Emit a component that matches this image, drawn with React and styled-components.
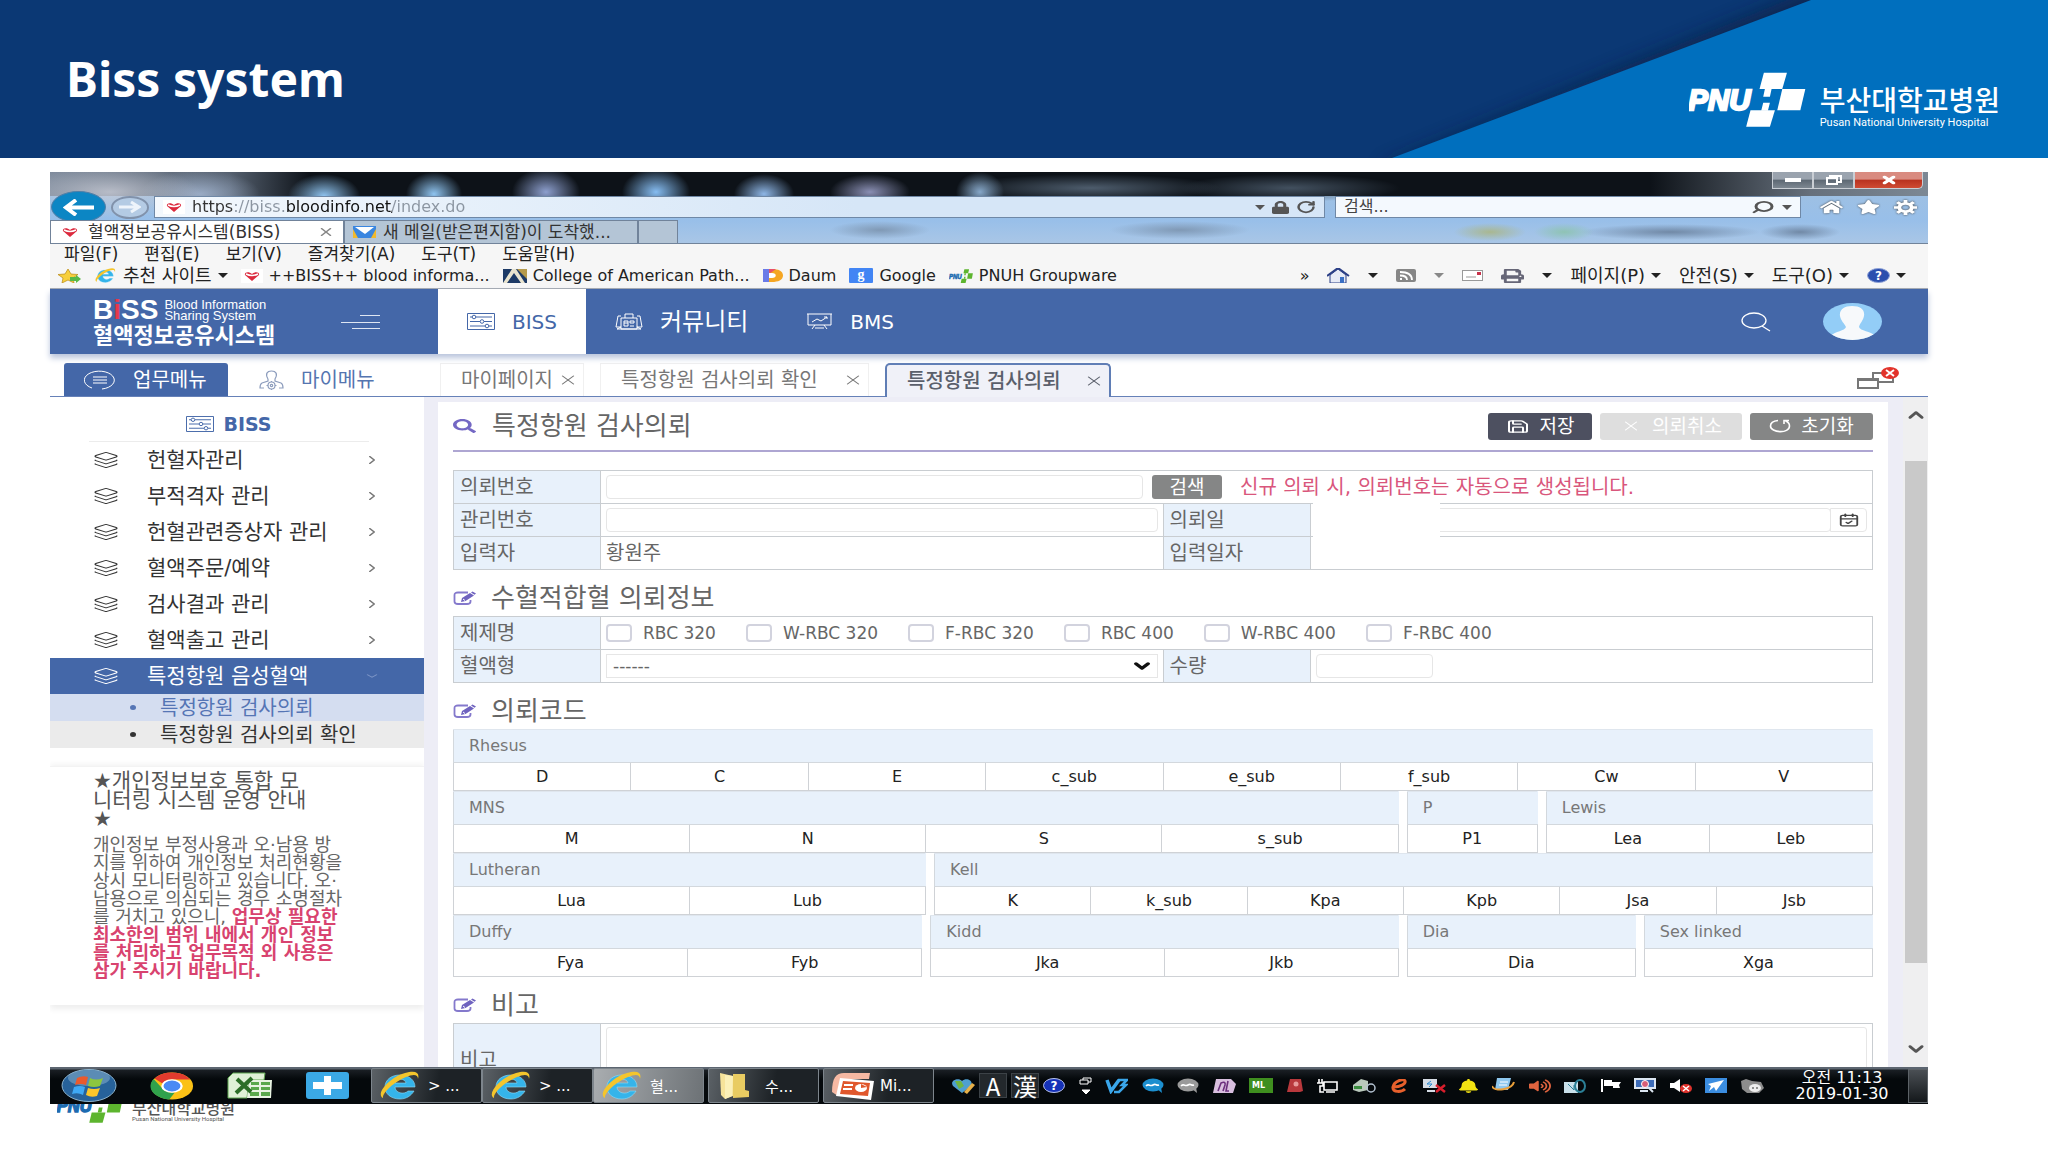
import React from "react";
import styled, { createGlobalStyle, css } from "styled-components";
import {
  Layers, ChevronRight, ChevronDown, ChevronUp, X, Search, RotateCw,
  Save, CalendarCheck, Rss,
} from "lucide-react";
import {
  FaSearch, FaLock, FaHome, FaStar, FaPrint, FaBell, FaFlag, FaVolumeUp, FaVolumeMute,
} from "react-icons/fa";

const GlobalStyle = createGlobalStyle`
  * { box-sizing: border-box; }
  body { margin: 0; background: #fff; }
  body, button, input, select, textarea {
    font-family: "DejaVu Sans", "Noto Sans CJK KR", sans-serif;
  }
  button { border: 0; padding: 0; background: none; color: inherit; cursor: pointer; }
  a { color: inherit; text-decoration: none; }
  ul { list-style: none; margin: 0; padding: 0; }
  h1, h2, h3, p { margin: 0; font-weight: 400; }
`

const Icon = styled.svg.attrs({ preserveAspectRatio: "none", "aria-hidden": true })`
  width: ${(p) => p.$w}px;
  height: ${(p) => p.$h}px;
  flex: none;
  display: block;
`

/* slide */

const Page = styled.div`
  height: 100vh;
  display: flex;
  flex-direction: column;
  overflow: hidden;
`

const SlideHeader = styled.header`
  position: relative;
  height: 158px;
  flex: none;
  display: flex;
  align-items: center;
  justify-content: space-between;
  padding: 0 48px 0 66px;
  background: #0b3874;
  color: #fff;
`

const SlideShape = styled.svg`
  position: absolute;
  top: 0;
  right: 0;
  width: 700px;
  height: 158px;
`

const SlideTitle = styled.h1`
  font: 700 48px/60px "Noto Sans", sans-serif;
`

const Brand = styled.div`
  position: relative;
  display: flex;
  align-items: ${(p) => (p.$small ? "flex-end" : "center")};
  gap: ${(p) => (p.$small ? 9 : 14)}px;
  margin-top: ${(p) => (p.$small ? 0 : 40)}px;
`

const BrandText = styled.div`
  padding-top: ${(p) => (p.$small ? 0 : 16)}px;
  color: ${(p) => (p.$small ? "#555" : "#fff")};
  strong {
    display: block;
    font: 500 ${(p) => (p.$small ? "16px/16px" : "28px/32px")} "Noto Sans CJK KR", sans-serif;
  }
  span {
    display: block;
    font: 400 ${(p) => (p.$small ? "6px/8px" : "11px/16px")} "Roboto", sans-serif;
  }
`

const SlideFooter = styled.footer`
  height: 19px;
  margin: 0 0 29px 57px;
  flex: none;
  overflow: hidden;
  display: flex;
  align-items: flex-end;
`

/* browser window */

const Window = styled.div`
  flex: 1;
  min-height: 0;
  margin: 14px 120px 0 50px;
  display: flex;
  flex-direction: column;
  color: #222;
`

const Glass = styled.div`
  background:
    radial-gradient(ellipse 90px 26px at 60px 20px, #c9ccd6cc, transparent),
    radial-gradient(ellipse 60px 24px at 150px 22px, #a9bcd8cc, transparent),
    radial-gradient(ellipse 36px 22px at 274px 24px, #8fc4f0, transparent),
    radial-gradient(ellipse 28px 22px at 384px 22px, #8fc4f0, transparent),
    radial-gradient(ellipse 34px 24px at 496px 20px, #8d9fce, transparent),
    radial-gradient(ellipse 34px 24px at 606px 20px, #86bdf2, transparent),
    radial-gradient(ellipse 30px 20px at 714px 22px, #8eb6e6, transparent),
    radial-gradient(ellipse 40px 18px at 820px 20px, #8a8fb4, transparent),
    radial-gradient(ellipse 24px 20px at 930px 20px, #86a7c8, transparent),
    radial-gradient(ellipse 130px 14px at 1040px 16px, #4d5c6c, transparent),
    radial-gradient(ellipse 110px 14px at 1240px 16px, #42505f, transparent),
    radial-gradient(ellipse 50px 9px at 830px 58px, #8099b5, transparent),
    radial-gradient(ellipse 70px 9px at 1130px 58px, #8099b5, transparent),
    radial-gradient(ellipse 36px 9px at 1440px 60px, #a9b790, transparent),
    radial-gradient(ellipse 30px 9px at 1514px 60px, #8fc3b4, transparent),
    radial-gradient(ellipse 90px 8px at 1620px 60px, #7189a6, transparent),
    radial-gradient(ellipse 40px 8px at 1750px 60px, #7189a6, transparent),
    linear-gradient(90deg, #7f8b9c 0, #55606f 180px, #0d1218 260px, #0d1218 1600px, #66707c 1760px, #7c8894 100%) 0 0 / 100% 24px no-repeat,
    linear-gradient(180deg, #9dc0e4 24px, #98bfe9 48px, #a9c6e6 100%);
`

const TitleBar = styled.div`
  height: 18px;
  display: flex;
  justify-content: flex-end;
  padding-right: 5px;
`

const CaptionButton = styled.button`
  width: ${(p) => (p.$close ? 69 : 41)}px;
  height: 17px;
  display: flex;
  align-items: center;
  justify-content: center;
  border: 1px solid #c9ced4;
  border-top: 0;
  border-radius: ${(p) => (p.$close ? "0 0 5px 0" : "0")};
  background: ${(p) => (p.$close
    ? "linear-gradient(#d98b80 0 45%, #b8321f 50%, #cf4b33)"
    : "linear-gradient(#9aa3ae 0 45%, #5d6873 50%, #7d8791)")};
`

const AddressRow = styled.div`
  height: 30px;
  display: flex;
  align-items: center;
  padding: 4px 11px 0 0;
`

const BackButton = styled.button`
  width: 55px;
  height: 32px;
  margin-left: 1px;
  border-radius: 50%;
  background: #0c86c4;
  border: 1px solid #4f7fa8;
  display: flex;
  align-items: center;
  justify-content: center;
`

const ForwardButton = styled(BackButton)`
  width: 38px;
  height: 23px;
  margin: 0 5px;
  background: #b4cbe4;
  border: 2px solid #8192ab;
`

const Field = styled.label`
  height: 22px;
  display: flex;
  align-items: center;
  gap: 7px;
  padding: 0 8px;
  border: 1px solid #6f88a6;
  background: ${(p) => (p.$search ? "#f4f9fe" : "linear-gradient(90deg, #f3f8fd, #d6e6f7 60%)")};
  flex: ${(p) => (p.$search ? "0 0 466px" : "1")};
  margin-right: ${(p) => (p.$search ? 19 : 10)}px;
`

const FieldInput = styled.input`
  flex: 1;
  min-width: 0;
  border: 0;
  padding: 0;
  outline: 0;
  background: none;
  font-size: 16px;
  line-height: 20px;
  color: #222;
  &::placeholder { color: #444; opacity: 1; }
`

const UrlInput = styled(FieldInput)`
  color: transparent;
  background: linear-gradient(90deg, #333 42px, #8b95a1 42px 94px, #111 94px 200px, #8b95a1 200px);
  background-clip: text;
`

const ChromeTools = styled.div`
  display: flex;
  gap: 14px;
  color: #fff;
  svg { filter: drop-shadow(0 0 1px #444); }
`

const BrowserTabs = styled.div`
  height: 23px;
  display: flex;
`

const BrowserTab = styled.button`
  width: ${(p) => p.$w}px;
  display: flex;
  align-items: center;
  gap: 7px;
  padding: 0 8px;
  font-size: 17px;
  line-height: 20px;
  white-space: nowrap;
  color: #333;
  border: 1px solid #71839a;
  border-bottom: 0;
  background: ${(p) => (p.$active ? "#fff" : "#b4c5d6")};
  span { flex: 1; text-align: left; }
`

const MenuBar = styled.nav`
  height: 20px;
  display: flex;
  align-items: center;
  gap: 26px;
  padding-left: 14px;
  background: #f6f6f6;
  border-top: 1px solid #71839a;
  font-size: 17px;
  line-height: 18px;
`

const LinksBar = styled.div`
  height: 26px;
  display: flex;
  align-items: center;
  gap: 13px;
  padding: 0 22px 0 8px;
  background: #f6f6f6;
  border-bottom: 1px solid #a3a8b0;
  font-size: 16px;
  line-height: 20px;
  white-space: nowrap;
`

const LinkItem = styled.a`
  display: flex;
  align-items: center;
  gap: 6px;
  font-size: ${(p) => (p.$ko ? 18 : 16)}px;
`

const LinkTools = styled.div`
  margin-left: auto;
  display: flex;
  align-items: center;
  gap: 18px;
`

/* BISS application */

const AppHeader = styled.header`
  height: 65px;
  flex: none;
  display: flex;
  align-items: stretch;
  background: #4467a8;
  color: #fff;
  position: relative;
  box-shadow: 0 4px 6px #b9c4dc;
`

const BissLogo = styled.a`
  width: 388px;
  padding: 10px 58px 0 43px;
  display: flex;
  justify-content: space-between;
`

const LogoTop = styled.div`
  display: flex;
  align-items: center;
  gap: 6px;
  height: 22px;
  strong { font: 700 28px/22px "Liberation Sans", sans-serif; }
  i { font-style: normal; color: #e8384a; }
  span { font: 400 13px/11px "Liberation Sans", sans-serif; }
`

const LogoBottom = styled.div`
  font: 700 22px/24px "Noto Sans CJK KR", sans-serif;
`

const MainNavItem = styled.a`
  display: flex;
  align-items: center;
  gap: 17px;
  padding: 0 29px;
  font-size: ${(p) => (p.$ko ? 24 : 20)}px;
  line-height: 28px;
  ${(p) => p.$active && css`
    background: #fff;
    color: #4467a8;
  `}
`

const HeaderTools = styled.div`
  margin-left: auto;
  display: flex;
  align-items: center;
  gap: 52px;
  padding-right: 46px;
`

const CloseTabs = styled.button`
  margin: 0 29px 7px auto;
`

const TabRow = styled.div`
  height: 43px;
  flex: none;
  display: flex;
  align-items: flex-end;
  border-bottom: 1px solid #6681b8;
`

const SideSwitch = styled.div`
  width: 390px;
  padding-left: 14px;
  display: flex;
`

const SwitchButton = styled.button`
  height: 33px;
  display: flex;
  align-items: center;
  gap: 17px;
  font-size: 20px;
  line-height: 24px;
  border-radius: 3px 3px 0 0;
  width: ${(p) => (p.$active ? 164 : 176)}px;
  padding-left: ${(p) => (p.$active ? 20 : 31)}px;
  color: ${(p) => (p.$active ? "#fff" : "#5575b0")};
  background: ${(p) => (p.$active ? "#4467a8" : "none")};
`

const PageTab = styled.div`
  height: 33px;
  display: flex;
  align-items: center;
  justify-content: space-between;
  width: ${(p) => p.$w}px;
  margin-right: 16px;
  padding: 0 4px 0 20px;
  border: 1px solid #f0f0f0;
  border-bottom: 0;
  font-size: 20px;
  line-height: 24px;
  white-space: nowrap;
  color: #777;
  ${(p) => p.$active && css`
    height: 34px;
    margin-bottom: -1px;
    border: 2px solid #5f7db5;
    border-bottom: 0;
    border-radius: 5px 5px 0 0;
    background: #f0f1f8;
    color: #5a5f6b;
    font-weight: 500;
  `}
`

const Workspace = styled.div`
  flex: 1;
  min-height: 0;
  display: flex;
  background: #ededf6;
`

const Sidebar = styled.aside`
  width: 374px;
  flex: none;
  overflow: hidden;
  background: #fff;
`

const SideTitle = styled.h2`
  display: flex;
  align-items: center;
  justify-content: center;
  gap: 9px;
  height: 45px;
  margin: 0 55px 0 39px;
  padding-top: 10px;
  border-bottom: 1px solid #ececec;
  font-size: 19px;
  font-weight: 700;
  color: #4467a8;
`

const SideLink = styled.a`
  height: 36px;
  display: flex;
  align-items: center;
  gap: 28px;
  padding: 0 43px;
  font-size: 21px;
  line-height: 28px;
  color: ${(p) => (p.$active ? "#fff" : "#333")};
  background: ${(p) => (p.$active ? "#4467a8" : "none")};
  span { flex: 1; white-space: nowrap; }
`

const SubLink = styled.a`
  height: 27px;
  display: flex;
  align-items: center;
  gap: 24px;
  padding-left: 80px;
  font-size: 20px;
  line-height: 24px;
  color: ${(p) => (p.$active ? "#5575b5" : "#333")};
  background: ${(p) => (p.$active ? "#d4ddf0" : "#ebebeb")};
  &::before {
    content: "";
    width: 6px;
    height: 5px;
    border-radius: 50%;
    background: currentColor;
  }
`

const Notice = styled.section`
  margin-top: 18px;
  height: 239px;
  padding: 5px 20px 0 43px;
  border-top: 1px solid #f3f3f3;
  box-shadow: 0 4px 6px #eee, 0 -3px 5px #f6f6f6;
  white-space: nowrap;
  h3 { font-size: 21px; line-height: 19px; color: #555; margin-bottom: 7px; }
  p { font-size: 18px; line-height: 18px; color: #666; }
  b { color: #d8436f; font-weight: 700; }
`

const Panel = styled.main`
  flex: 1;
  min-width: 0;
  margin: 5px 15px 0 14px;
  padding: 0 15px;
  background: #fff;
  overflow: hidden;
`

const PanelHead = styled.div`
  height: 50px;
  margin-bottom: 18px;
  display: flex;
  align-items: center;
  gap: 8px;
  border-bottom: 2px solid #aea6d2;
`

const PanelTitle = styled.h2`
  flex: 1;
  display: flex;
  align-items: center;
  gap: 16px;
  font-size: 26px;
  line-height: 32px;
  color: #666;
`

const ActionButton = styled.button`
  height: 27px;
  display: flex;
  align-items: center;
  justify-content: center;
  gap: 10px;
  width: ${(p) => p.$w}px;
  border-radius: 3px;
  font-size: 19px;
  line-height: 24px;
  color: #fff;
  background: ${(p) => p.$bg};
`

const LookupButton = styled(ActionButton)`
  height: 24px;
  margin-left: 9px;
`

const SectionTitle = styled.h3`
  height: 46px;
  display: flex;
  align-items: center;
  gap: 15px;
  padding-top: 10px;
  font-size: 26px;
  line-height: 32px;
  color: #666;
`

const FormTable = styled.table`
  width: 100%;
  table-layout: fixed;
  border-collapse: collapse;
  font-size: 20px;
  line-height: 24px;
  color: #666;
  th, td {
    height: ${(p) => p.$rowHeight || 33}px;
    padding: 0 6px;
    border: 1px solid #c9cdd1;
    text-align: left;
    font-weight: 400;
  }
  th { background: #e8f1fb; }
  td { padding: 0 5px; }
`

const LabelCol = styled.col`
  width: 147px;
`

const Cell = styled.div`
  position: relative;
  display: flex;
  align-items: center;
  gap: ${(p) => p.$gap || 0}px;
`

const TextInput = styled.input`
  display: block;
  height: 24px;
  width: ${(p) => (p.$w ? p.$w + "px" : "100%")};
  border: 1px solid #e6e6e6;
  border-radius: 4px;
  background: #fff;
  font-size: 16px;
`

const BloodSelect = styled.select`
  width: 100%;
  height: 24px;
  border: 1px solid #e6e6e6;
  background: #fff;
  padding: 0 6px;
  font-size: 17px;
  color: #666;
  appearance: none;
`

const SelectArrow = styled.span`
  position: absolute;
  right: 4px;
  color: #111;
  pointer-events: none;
`

const DateButton = styled.button`
  width: 37px;
  height: 24px;
  flex: none;
  margin-left: -1px;
  border: 1px solid #e6e6e6;
  border-radius: 0 4px 4px 0;
  display: flex;
  align-items: center;
  justify-content: center;
  color: #444;
`

const Blank = styled.span`
  position: absolute;
  left: -3px;
  top: -6px;
  width: 127px;
  height: 37px;
  background: #fff;
`

const Hint = styled.span`
  margin-left: 18px;
  color: #d9567c;
`

const Check = styled.label`
  display: flex;
  align-items: center;
  gap: 11px;
  font-size: 17px;
  input {
    appearance: none;
    width: 26px;
    height: 18px;
    margin: 0;
    border: 2px solid #d2d3de;
    border-radius: 4px;
  }
`

const Remark = styled.textarea`
  display: block;
  width: 100%;
  height: 66px;
  border: 1px solid #e6e6e6;
  border-radius: 3px;
  resize: none;
`

const CodeRow = styled.div`
  display: grid;
  grid-template-columns: ${(p) => p.$cols};
  gap: 8px;
`

const CodeTable = styled.table`
  width: 100%;
  table-layout: fixed;
  border-collapse: collapse;
  font-size: 16px;
  line-height: 20px;
  th {
    height: 33px;
    padding: 0 15px;
    text-align: left;
    font-weight: 400;
    color: #777;
    background: #e8f1fb;
    border: 1px solid #d3d8dd;
    border-right-color: #e8f1fb;
    border-top-color: #dfe6ee;
  }
  td {
    height: 28px;
    padding: 0;
    border: 1px solid #cfd2d6;
    text-align: center;
    color: #222;
  }
  button { width: 100%; font-size: 16px; }
`

const Scroll = styled.div`
  width: 25px;
  flex: none;
  padding: 8px 2px;
  display: flex;
  flex-direction: column;
  align-items: center;
  background: #efeff0;
  color: #555;
`

const Thumb = styled.div`
  width: 22px;
  flex: 499 0 0;
  background: #c9c9c9;
`

const Spacer = styled.div`
  flex: ${(p) => p.$grow} 0 0;
`

/* taskbar */

const Taskbar = styled.footer`
  height: 37px;
  flex: none;
  display: flex;
  align-items: center;
  background: linear-gradient(#5c6570 0 2px, #1a1f24 3px, #05090c 12px);
  color: #fff;
`

const Pinned = styled.div`
  width: 321px;
  flex: none;
  display: flex;
  align-items: center;
  gap: 33px;
  padding-left: 11px;
`

const TaskButton = styled.button`
  width: 111px;
  height: 35px;
  flex: none;
  display: flex;
  align-items: center;
  gap: 6px;
  padding-left: 6px;
  margin-right: ${(p) => p.$mr || 0}px;
  border: 1px solid #7d858c;
  border-radius: 2px;
  font-size: 15px;
  color: #fff;
  background: ${(p) => (p.$active
    ? "linear-gradient(100deg, #a9adb0, #6d7276)"
    : "linear-gradient(100deg, #5b6166, #1d2226 60%)")};
`

const LangBar = styled.div`
  display: flex;
  align-items: center;
  gap: 4px;
  margin-left: 17px;
  svg:last-child { margin-left: 10px; }
`

const LangKey = styled.span`
  width: 28px;
  height: 25px;
  border: 1px solid #3c4247;
  background: #23282c;
  text-align: center;
  font: 400 24px/24px "Noto Sans CJK JP", sans-serif;
`

const Tray = styled.div`
  flex: 1;
  display: flex;
  align-items: center;
  justify-content: space-between;
  padding: 0 30px 0 12px;
`

const Clock = styled.div`
  width: 96px;
  margin-right: 18px;
  text-align: center;
  font-size: 16px;
  line-height: 16px;
  white-space: nowrap;
`

const ShowDesktop = styled.button`
  width: 20px;
  height: 34px;
  border: 1px solid #5c6267;
  background: linear-gradient(#4a4f54, #14181b);
`

/* icons */

const Heart = () => (
  <Icon $w={22} $h={14} viewBox="0 0 22 14">
    <rect width="22" height="14" fill="#fff" />
    <path d="M11 12 4 6c-1-3 4-4 7-1 3-3 8-2 7 1z" fill="#dc2a3e" />
    <path d="M5 5q6 3 12 0" stroke="#fff" strokeWidth="1.4" fill="none" />
  </Icon>
)

const Caret = ({ color = "#222" }) => (
  <Icon $w={10} $h={5} viewBox="0 0 10 5"><path d="M0 0h10L5 5z" fill={color} /></Icon>
)

const Biss = ({ w = 28, h = 17 }) => (
  <Icon $w={w} $h={h} viewBox="0 0 28 17" fill="none" stroke="currentColor">
    <path d="M.5.5h27v16H.5zM3 4h2m4 0h16M3 8.500h10m4 0h8M3 13h15m4 0h3" />
    <circle cx="7" cy="4" r="1.800" />
    <circle cx="15" cy="8.500" r="1.800" />
    <circle cx="20" cy="13" r="1.800" />
  </Icon>
)

const Explorer = ({ w = 44, h = 29 }) => (
  <Icon $w={w} $h={h} viewBox="0 0 44 29">
    <path d="M37 16H17c0 6 9 8 13 4h6c-3 5-8 8-14 8C13 28 7 23 7 16S13 4 22 4s15 5 15 12zm-9-4c-1-5-10-5-11 0z" fill="#35b4ea" stroke="#8fdcf8" strokeWidth=".6" />
    <path d="M5 27C-3 23 12 6 27 2c10-3 15-1 13 6 0-5-5-5-12-2C16 11 4 22 5 27z" fill="#f4c52c" />
  </Icon>
)

const PnuhMark = ({ w, h, small }) => {
  const main = small ? "#1d6bb0" : "#fff"
  const cross = small ? "#5db52e" : "#fff"
  return (
    <Icon $w={w} $h={h} viewBox="0 0 350 165">
      <path d="M224 2h69l-14 49h-68z" fill={cross} />
      <path d="M279 51h69l-15 64h-69z" fill={cross} />
      <path d="M184 115h73l-15 49h-71z" fill={cross} />
      <path d="M227 51h20l-5 23h-20zM222 92h20l-6 24h-20z" fill={cross} />
      <text x="-2" y="114" fill={main} stroke={main} strokeWidth="7" fontFamily="Liberation Sans" fontStyle="italic" fontWeight="700" fontSize="88">PNU</text>
    </Icon>
  )
}

const Bubble = ({ color }) => (
  <Icon $w={22} $h={15} viewBox="0 0 22 15">
    <ellipse cx="11" cy="7" rx="10.500" ry="6.500" fill={color} />
    <path d="m15 11 5 4-1-6z" fill={color} />
    <path d="M4 8c3-3 4 1 7-1s3 1 6 0" stroke="#fff" strokeWidth="1.600" fill="none" />
  </Icon>
)

const Board = () => (
  <Icon $w={27} $h={17} viewBox="0 0 27 17" fill="none" stroke="currentColor">
    <path d="M1 1h25M2 1v11h23V1M6 9l5-3 4 2 6-4m-3 0h3v2M9 12l-3 4m12-4 3 4M9 15h9" />
  </Icon>
)

const Community = () => (
  <Icon $w={28} $h={17} viewBox="0 0 28 17" fill="none" stroke="currentColor">
    <path d="M6 3H3L1 14h5m16-11h3l2 11h-5M6 5h16v11H6zM10 5V1h8v4M6 14l-4 2h24l-4-2" />
    <path d="M9 8h4v5H9zm6 0h4v2h-4zm0 5h4M9 10h4" />
  </Icon>
)

const Edit = () => (
  <Icon $w={23} $h={14} viewBox="0 0 23 14">
    <path d="M15 1.500H5Q1.500 1.500 1.500 4v6.500Q1.500 13 5 13h9q3.500 0 3.500-2.500V9" stroke="#8479cc" strokeWidth="1.800" fill="none" />
    <path d="m8 11 1-4 8-5 4 2.500-8.500 5.500zM18 1.500 19.500.500 23 2.500l-1.500 1.200z" fill="#6f63bf" />
    <path d="m10 8 2 1.500" stroke="#fff" />
  </Icon>
)

const Person = () => (
  <Icon $w={25} $h={20} viewBox="0 0 25 20" fill="none" stroke="#8d9dbd" strokeWidth="1.200">
    <path d="M9 9C6 4 8 1 12.500 1S19 4 16 9v2l6 2q2 1 2 5h-4M9 9v2l-6 2q-2 1-2 5h4" />
    <circle cx="12.500" cy="15.500" r="3.500" />
    <circle cx="12.500" cy="15.500" r="1.200" />
    <path d="M12.500 11v1m0 7v1M7.500 15.500h1.500m7 0h1.500" />
  </Icon>
)

const CloseIcon = () => <Icon as={X} $w={22} $h={16} strokeWidth={1.5} />

const sideItems = ["헌혈자관리", "부적격자 관리", "헌혈관련증상자 관리", "혈액주문/예약", "검사결과 관리", "혈액출고 관리"]
const products = ["RBC 320", "W-RBC 320", "F-RBC 320", "RBC 400", "W-RBC 400", "F-RBC 400"]
const codeRows = [
  { cols: "1fr", groups: [["Rhesus", ["D", "C", "E", "c_sub", "e_sub", "f_sub", "Cw", "V"]]] },
  { cols: "945fr 131fr 327fr", groups: [["MNS", ["M", "N", "S", "s_sub"]], ["P", ["P1"]], ["Lewis", ["Lea", "Leb"]]] },
  { cols: "473fr 939fr", groups: [["Lutheran", ["Lua", "Lub"]], ["Kell", ["K", "k_sub", "Kpa", "Kpb", "Jsa", "Jsb"]]] },
  { cols: "469fr 468fr 229fr 229fr", groups: [["Duffy", ["Fya", "Fyb"]], ["Kidd", ["Jka", "Jkb"]], ["Dia", ["Dia"]], ["Sex linked", ["Xga"]]] },
]

const Section = ({ children }) => (
  <SectionTitle><Edit />{children}</SectionTitle>
)

const SlideTop = () => (
  <SlideHeader>
    <SlideShape viewBox="0 0 700 158" preserveAspectRatio="none">
      <defs>
        <filter id="soft"><feGaussianBlur stdDeviation="9" /></filter>
      </defs>
      <path d="M463-10 30 168h700V-10z" fill="#0a2346" opacity=".75" filter="url(#soft)" />
      <path d="M463 0 44 158h656V0z" fill="#006fbe" />
    </SlideShape>
    <SlideTitle>Biss system</SlideTitle>
    <Brand>
      <PnuhMark w={117} h={55} />
      <BrandText>
        <strong>부산대학교병원</strong>
        <span>Pusan National University Hospital</span>
      </BrandText>
    </Brand>
  </SlideHeader>
)

const BrowserChrome = () => (
  <>
    <Glass>
      <TitleBar>
        <CaptionButton aria-label="최소화">
          <Icon $w={16} $h={4} viewBox="0 0 16 4"><rect width="16" height="4" fill="#fff" /></Icon>
        </CaptionButton>
        <CaptionButton aria-label="이전 크기로">
          <Icon $w={16} $h={10} viewBox="0 0 16 10" fill="none" stroke="#fff" strokeWidth="2"><path d="M1 3h10v6H1zM4 3V1h11v6h-4" /></Icon>
        </CaptionButton>
        <CaptionButton $close aria-label="닫기"><Icon as={X} $w={18} $h={12} color="#fff" strokeWidth={5} /></CaptionButton>
      </TitleBar>
      <AddressRow>
        <BackButton aria-label="뒤로">
          <Icon $w={31} $h={17} viewBox="0 0 31 17" fill="none" stroke="#fff" strokeWidth="4"><path d="M3 8.500h28M13 1 3 8.500 13 16" /></Icon>
        </BackButton>
        <ForwardButton aria-label="앞으로">
          <Icon $w={22} $h={12} viewBox="0 0 22 12" fill="none" stroke="#eef4fb" strokeWidth="3"><path d="M0 6h19M12 1l8 5-8 5" /></Icon>
        </ForwardButton>
        <Field>
          <Heart />
          <UrlInput aria-label="주소" defaultValue="https://biss.bloodinfo.net/index.do" />
          <Caret color="#555" />
          <Icon as={FaLock} $w={17} $h={13} color="#555" />
          <Icon as={RotateCw} $w={20} $h={14} color="#555" strokeWidth={3} />
        </Field>
        <Field $search>
          <FieldInput aria-label="검색" placeholder="검색..." />
          <Icon as={Search} $w={24} $h={14} color="#555" strokeWidth={3} transform="scale(-1 1)" />
          <Caret color="#555" />
        </Field>
        <ChromeTools>
          <Icon as={FaHome} $w={23} $h={14} />
          <Icon as={FaStar} $w={23} $h={14} />
          <Icon $w={23} $h={15} viewBox="0 0 24 24" fill="none" stroke="#fff" strokeWidth="4">
            <circle cx="12" cy="12" r="6.500" />
            <path d="M12 0v5m0 14v5M0 12h5m14 0h5M3.500 3.500 7 7m10 10 3.500 3.500M20.500 3.500 17 7M7 17l-3.500 3.500" />
          </Icon>
        </ChromeTools>
      </AddressRow>
      <BrowserTabs>
        <BrowserTab $active $w={294}>
          <Heart /><span>혈액정보공유시스템(BISS)</span><Icon as={X} $w={18} $h={14} color="#888" />
        </BrowserTab>
        <BrowserTab $w={294}>
          <Icon $w={23} $h={12} viewBox="0 0 23 12"><rect width="23" height="12" fill="#3a86e0" /><path d="M2 1h19l-9 7z" fill="#fff" /><path d="M0 12V3l5 9zm23 0V3l-5 9z" fill="#f2b92c" /></Icon>
          <span>새 메일(받은편지함)이 도착했...</span>
        </BrowserTab>
        <BrowserTab $w={40} aria-label="새 탭" />
      </BrowserTabs>
    </Glass>
    <MenuBar>
      {["파일(F)", "편집(E)", "보기(V)", "즐겨찾기(A)", "도구(T)", "도움말(H)"].map((m) => <a href="#menu" key={m}>{m}</a>)}
    </MenuBar>
    <LinksBar>
      <Icon $w={23} $h={14} viewBox="0 0 23 14">
        <path d="m10 0 3 5 7 .5-5 3.500 1 5-6-3-6 3 1-5L0 5.500 7 5z" fill="#f7cf3c" stroke="#b98a12" strokeWidth=".7" />
        <path d="M12 8h6V6l5 4-5 4v-2h-6z" fill="#58b947" />
      </Icon>
      <LinkItem $ko href="#suggested">
        <Explorer w={23} h={15} />추천 사이트<Caret />
      </LinkItem>
      <LinkItem href="#biss"><Heart />++BISS++ blood informa...</LinkItem>
      <LinkItem href="#cap">
        <Icon $w={24} $h={14} viewBox="0 0 24 14"><rect width="24" height="14" fill="#1d3a66" /><path d="M0 14 9 0h4l9 14h-4L11 4 4 14z" fill="#e9e4cf" /><path d="M14 0h10v10z" fill="#b59a4c" /></Icon>
        College of American Path...
      </LinkItem>
      <LinkItem href="#daum">
        <Icon $w={20} $h={13} viewBox="0 0 20 13"><path d="M0 0h9c6 0 11 2 11 6.500S15 13 9 13H0z" fill="#f5a623" /><path d="M0 0h6v13H0z" fill="#6a7be8" /><path d="M6 0h7l-7 5z" fill="#e8506a" /><path d="M6 4h3c5 0 5 5 0 5H6z" fill="#fff" /></Icon>
        Daum
      </LinkItem>
      <LinkItem href="#google">
        <Icon $w={24} $h={15} viewBox="0 0 24 15"><rect width="24" height="15" rx="1" fill="#4285f4" /><text x="12" y="11" textAnchor="middle" fill="#fff" fontFamily="Liberation Serif" fontWeight="700" fontSize="14">g</text></Icon>
        Google
      </LinkItem>
      <LinkItem href="#pnuh"><PnuhMark small w={24} h={14} />PNUH Groupware</LinkItem>
      <LinkTools>
        <span>»</span>
        <Icon $w={23} $h={15} viewBox="0 0 23 15"><path d="M3 7v8h16V7L11 1z" fill="#e7ebf6" stroke="#2b3f86" /><path d="M0 8 11 0l11 8" stroke="#2b3f86" strokeWidth="2" fill="none" /><path d="M13 9h4v6h-4z" fill="#3a6fc4" /></Icon>
        <Caret />
        <Icon $w={20} $h={13} viewBox="0 0 20 13" fill="none" stroke="#fff" strokeWidth="1.800"><rect width="20" height="13" rx="2" fill="#868686" stroke="none" /><path d="M4 3q12 0 12 8M4 6.500q7 0 7 4.500M4 10h2" /></Icon>
        <Caret color="#888" />
        <Icon $w={21} $h={11} viewBox="0 0 21 11"><rect x=".5" y=".5" width="20" height="10" fill="#fff" stroke="#999" /><rect x="15" y="2" width="4" height="3" fill="#c8324a" /><path d="M4 7h10" stroke="#999" /></Icon>
        <Icon as={FaPrint} $w={23} $h={14} color="#667" />
        <Caret />
        <LinkItem $ko href="#page">페이지(P)<Caret /></LinkItem>
        <LinkItem $ko href="#safe">안전(S)<Caret /></LinkItem>
        <LinkItem $ko href="#tools">도구(O)<Caret /></LinkItem>
        <LinkItem href="#help" aria-label="도움말">
          <Icon $w={23} $h={15} viewBox="0 0 23 15"><ellipse cx="11.500" cy="7.500" rx="11" ry="7" fill="#2c4fae" stroke="#8fa3d8" /><text x="11.500" y="12" textAnchor="middle" fill="#fff" fontFamily="DejaVu Sans" fontWeight="700" fontSize="12">?</text></Icon>
          <Caret />
        </LinkItem>
      </LinkTools>
    </LinksBar>
  </>
)

const BissHeader = () => (
  <>
    <AppHeader>
      <BissLogo href="#home">
        <div>
          <LogoTop>
            <strong>B<i>i</i>SS</strong>
            <span>Blood Information<br />Sharing System</span>
          </LogoTop>
          <LogoBottom>혈액정보공유시스템</LogoBottom>
        </div>
        <Icon $w={39} $h={43} viewBox="0 0 39 43" stroke="#dfe6f3" strokeWidth="1"><path d="M19 16.500h20M0 23.500h39M11 29.500h28" /></Icon>
      </BissLogo>
      <MainNavItem $active href="#biss"><Biss />BISS</MainNavItem>
      <MainNavItem $ko href="#community"><Community />커뮤니티</MainNavItem>
      <MainNavItem href="#bms"><Board />BMS</MainNavItem>
      <HeaderTools>
        <Icon $w={30} $h={20} viewBox="0 0 30 20" fill="none" stroke="#fff" strokeWidth="1.300"><ellipse cx="13" cy="8.500" rx="12" ry="7.500" /><path d="m21 14 8 5" /></Icon>
        <Icon $w={59} $h={37} viewBox="0 0 59 37">
          <clipPath id="face"><ellipse cx="29.500" cy="18.500" rx="29.500" ry="18.500" /></clipPath>
          <g clipPath="url(#face)">
            <path d="M0 0h59v37H0z" fill="#93cdf7" />
            <path d="M29 3c9 0 13 4 12 10-1 5-4 7-5 11 1 4 12 4 16 9v6H8v-6c4-5 14-5 15-9-2-4-5-6-6-11-1-6 4-10 12-10z" fill="#f7f9fb" />
          </g>
        </Icon>
      </HeaderTools>
    </AppHeader>
    <TabRow>
      <SideSwitch>
        <SwitchButton $active>
          <Icon $w={32} $h={20} viewBox="0 0 32 20" fill="none" stroke="#fff"><path d="M8 18A15 9 0 1 1 18 19" /><path d="M9 7h14M9 10h14M9 13h14" /></Icon>
          업무메뉴
        </SwitchButton>
        <SwitchButton><Person />마이메뉴</SwitchButton>
      </SideSwitch>
      <PageTab $w={144}>마이페이지<CloseIcon /></PageTab>
      <PageTab $w={269}>특정항원 검사의뢰 확인<CloseIcon /></PageTab>
      <PageTab $active $w={226}>특정항원 검사의뢰<CloseIcon /></PageTab>
      <CloseTabs aria-label="전체 탭 닫기">
        <Icon $w={42} $h={22} viewBox="0 0 42 22" fill="none">
          <path d="M1 12h20v9H1zM1 13h20M16 11V6h20v9H22" stroke="#777" strokeWidth="2" />
          <ellipse cx="33" cy="6" rx="9" ry="6" fill="#e2332b" />
          <path d="m29 3 8 6m0-6-8 6" stroke="#fff" strokeWidth="2" />
        </Icon>
      </CloseTabs>
    </TabRow>
  </>
)

const SideMenu = () => (
  <Sidebar>
    <SideTitle><Biss w={28} h={16} />BISS</SideTitle>
    <ul>
      {sideItems.map((name) => (
        <li key={name}>
          <SideLink href="#menu">
            <Icon as={Layers} $w={26} $h={18} strokeWidth={1.3} />
            <span>{name}</span>
            <Icon as={ChevronRight} $w={18} $h={14} color="#777" />
          </SideLink>
        </li>
      ))}
      <li>
        <SideLink $active href="#menu">
          <Icon as={Layers} $w={26} $h={18} strokeWidth={1.3} />
          <span>특정항원 음성혈액</span>
          <Icon as={ChevronDown} $w={18} $h={10} color="#7c95c6" />
        </SideLink>
        <SubLink $active href="#request">특정항원 검사의뢰</SubLink>
        <SubLink href="#confirm">특정항원 검사의뢰 확인</SubLink>
      </li>
    </ul>
    <Notice>
      <h3>★개인정보보호 통합 모<br />니터링 시스템 운영 안내<br />★</h3>
      <p>
        개인정보 부정사용과 오·남용 방<br />지를 위하여 개인정보 처리현황을<br />
        상시 모니터링하고 있습니다. 오·<br />남용으로 의심되는 경우 소명절차<br />
        를 거치고 있으니, <b>업무상 필요한<br />최소한의 범위 내에서 개인 정보<br />
        를 처리하고 업무목적 외 사용은<br />삼가 주시기 바랍니다.</b>
      </p>
    </Notice>
  </Sidebar>
)

const RequestForm = () => (
  <Panel>
    <PanelHead>
      <PanelTitle><Icon as={FaSearch} $w={23} $h={14} color="#7468c4" />특정항원 검사의뢰</PanelTitle>
      <ActionButton $w={104} $bg="#4d5060"><Icon as={Save} $w={24} $h={15} />저장</ActionButton>
      <ActionButton $w={142} $bg="#dedede" disabled><CloseIcon />의뢰취소</ActionButton>
      <ActionButton $w={123} $bg="#858686">
        <Icon $w={22} $h={14} viewBox="0 0 22 14" fill="none" stroke="#fff" strokeWidth="1.600"><path d="M9 1.500C4 2 1.500 4 1.500 7c0 7 19 8 19 0 0-2-1-4-4-5M15 5V1.500h5" /></Icon>
        초기화
      </ActionButton>
    </PanelHead>
    <FormTable>
      <colgroup><LabelCol /><col /><LabelCol /><col /></colgroup>
      <tbody>
        <tr>
          <th><label htmlFor="reqNo">의뢰번호</label></th>
          <td colSpan={3}>
            <Cell>
              <TextInput id="reqNo" $w={537} />
              <LookupButton $w={70} $bg="#858686">검색</LookupButton>
              <Hint>신규 의뢰 시, 의뢰번호는 자동으로 생성됩니다.</Hint>
            </Cell>
          </td>
        </tr>
        <tr>
          <th><label htmlFor="mngNo">관리번호</label></th>
          <td><TextInput id="mngNo" /></td>
          <th><label htmlFor="reqDate">의뢰일</label></th>
          <td>
            <Cell>
              <TextInput id="reqDate" />
              <DateButton aria-label="달력"><Icon as={CalendarCheck} $w={22} $h={14} /></DateButton>
              <Blank />
            </Cell>
          </td>
        </tr>
        <tr><th>입력자</th><td>황원주</td><th>입력일자</th><td /></tr>
      </tbody>
    </FormTable>

    <Section>수혈적합혈 의뢰정보</Section>
    <FormTable>
      <colgroup><LabelCol /><col /><LabelCol /><col /></colgroup>
      <tbody>
        <tr>
          <th>제제명</th>
          <td colSpan={3}>
            <Cell $gap={30}>
              {products.map((name) => <Check key={name}><input type="checkbox" />{name}</Check>)}
            </Cell>
          </td>
        </tr>
        <tr>
          <th><label htmlFor="blood">혈액형</label></th>
          <td>
            <Cell>
              <BloodSelect id="blood"><option>------</option></BloodSelect>
              <SelectArrow><Icon as={ChevronDown} $w={24} $h={18} strokeWidth={4} /></SelectArrow>
            </Cell>
          </td>
          <th><label htmlFor="qty">수량</label></th>
          <td><TextInput id="qty" $w={117} /></td>
        </tr>
      </tbody>
    </FormTable>

    <Section>의뢰코드</Section>
    {codeRows.map((row) => (
      <CodeRow key={row.cols} $cols={row.cols}>
        {row.groups.map(([name, codes]) => (
          <CodeTable key={name}>
            <thead><tr><th colSpan={codes.length}>{name}</th></tr></thead>
            <tbody><tr>{codes.map((code) => <td key={code}><button>{code}</button></td>)}</tr></tbody>
          </CodeTable>
        ))}
      </CodeRow>
    ))}

    <Section>비고</Section>
    <FormTable $rowHeight={72}>
      <colgroup><LabelCol /><col /></colgroup>
      <tbody>
        <tr><th><label htmlFor="remark">비고</label></th><td><Remark id="remark" /></td></tr>
      </tbody>
    </FormTable>
  </Panel>
)

const TaskbarRow = () => (
  <Taskbar>
    <Pinned>
      <Icon $w={56} $h={33} viewBox="0 0 56 33">
        <ellipse cx="28" cy="16.500" rx="27" ry="16" fill="#27629a" stroke="#8fb6d0" />
        <ellipse cx="28" cy="9" rx="21" ry="8" fill="#7fa9c8" opacity=".6" />
        <path d="M16 9q6-3 11-1l-2 8q-5-2-11 0z" fill="#ea5a2d" />
        <path d="M29 9q6 3 13 0l-3 8q-6 2-12 0z" fill="#8cc63f" />
        <path d="M13 18q6-2 11 0l-2 8q-5-3-11-1z" fill="#3fa9f5" />
        <path d="M27 19q6 2 12 0l-3 8q-6 2-11-1z" fill="#fbc62b" />
      </Icon>
      <Icon $w={44} $h={28} viewBox="0 0 48 48">
        <circle cx="24" cy="24" r="23" fill="#fbc116" />
        <path d="M24 1a23 23 0 0 1 20 12H24a11 11 0 0 0-10 7L5 11A23 23 0 0 1 24 1z" fill="#e33b2e" />
        <path d="M4 12l10 17a11 11 0 0 0 13 6l-6 12A23 23 0 0 1 4 12z" fill="#30a24c" />
        <circle cx="24" cy="24" r="10.500" fill="#4a8af4" stroke="#fff" strokeWidth="2.500" />
      </Icon>
      <Icon $w={46} $h={27} viewBox="0 0 46 27">
        <path d="M6 1h32l-1 7H22l-2 18H1V6z" fill="#dff0d6" stroke="#5fa651" />
        <path d="M22 8h23l-1 18H20z" fill="#e8f3e2" />
        <path d="M24 10h8v3h-8zm10 0h9v3h-9zM24 15h8v3h-8zm10 0h9v3h-9zM23 20h9v4h-9zm11 0h9v4h-9z" fill="#5aa84c" />
        <path d="m10 7 14 13M25 6 9 21" stroke="#2c6e27" strokeWidth="4" />
      </Icon>
      <Icon $w={43} $h={27} viewBox="0 0 43 27"><rect width="43" height="27" rx="3" fill="#3ba9e6" /><path d="M18 4h7v6h11v7H25v6h-7v-6H7v-7h11z" fill="#fff" /></Icon>
    </Pinned>
    <TaskButton><Explorer />&gt; ...</TaskButton>
    <TaskButton><Explorer />&gt; ...</TaskButton>
    <TaskButton $active $mr={4}><Explorer />혈...</TaskButton>
    <TaskButton $mr={4}>
      <Icon $w={44} $h={28} viewBox="0 0 44 28"><path d="m5 1 13 3v20l-8 3-4-4z" fill="#f6e39a" /><path d="M18 2h12v16l4 1v6l-16 1z" fill="#e9cc62" /><path d="m18 4-1 20-7 3V3z" fill="#fbf0b8" /></Icon>
      수...
    </TaskButton>
    <TaskButton>
      <Icon $w={44} $h={28} viewBox="0 0 44 28">
        <path d="M2 20C2 6 6 1 14 1h26l-1 6H12L8 24z" fill="#f6b9a3" />
        <path d="m10 6 34 3-3 19L6 24z" fill="#fff" />
        <path d="m13 9 27 2-2 13-28-2z" fill="#e0572c" />
        <path d="M14 12h9v2h-9zm-1 4h9v2h-9z" fill="#fff" />
        <ellipse cx="31" cy="16" rx="6" ry="4" fill="#fff" />
        <path d="M31 16v-4l6 3z" fill="#e0572c" />
      </Icon>
      Mi...
    </TaskButton>
    <LangBar>
      <Icon $w={24} $h={16} viewBox="0 0 24 16"><path d="M11 15 2 8C-2 2 8-1 11 3c4-4 12-1 9 5z" fill="#4f9fd0" /><path d="M4 3h6l3 5-5 3z" fill="#6fb544" /><path d="m13 14 8-9 3 2-8 9z" fill="#e8b14a" /></Icon>
      <LangKey>A</LangKey>
      <LangKey>漢</LangKey>
      <Icon $w={22} $h={15} viewBox="0 0 22 15"><ellipse cx="11" cy="7.500" rx="10.500" ry="7" fill="#1632b8" stroke="#b9c4ee" /><text x="11" y="12" textAnchor="middle" fill="#fff" fontFamily="DejaVu Sans" fontWeight="700" fontSize="12">?</text></Icon>
      <Icon $w={14} $h={18} viewBox="0 0 14 18" fill="none" stroke="#fff"><path d="M1 3h8v4H1zM4 3V1h8v4H9" /><path d="M3 13h8l-4 4z" fill="#fff" /></Icon>
    </LangBar>
    <Tray>
      <Icon $w={23} $h={16} viewBox="0 0 23 16" fill="none" stroke="#3aa6ea"><path d="m2 2 4 11 8-11" strokeWidth="3.500" /><path d="M13 2h9l-5 5h4l-7 7H9" strokeWidth="2.500" /></Icon>
      <Bubble color="#1c8fcf" />
      <Bubble color="#9a9a9a" />
      <Icon $w={23} $h={14} viewBox="0 0 23 14"><path d="M3 0h15l5 5-3 9H0z" fill="#d9bfdf" /><path d="m5 12 3-8q5-2 4 2l-2 6m5-10-2 10h3" stroke="#6b2f7d" strokeWidth="1.600" fill="none" /></Icon>
      <Icon $w={24} $h={15} viewBox="0 0 24 15"><rect width="24" height="15" fill="#3f8f1f" /><text x="3" y="10" fill="#fff" fontFamily="DejaVu Sans" fontWeight="700" fontSize="8">ML</text></Icon>
      <Icon $w={16} $h={13} viewBox="0 0 16 13"><path d="M3 0h11l2 12-3 1H0z" fill="#b8383c" /><circle cx="9" cy="5" r="2.500" fill="#e79a9a" /></Icon>
      <Icon $w={22} $h={14} viewBox="0 0 22 14" fill="none" stroke="#fff" strokeWidth="1.600"><path d="M8 3h13v8H8zM3 0v4m3-4v4M1 4h6v3H4v6h4m2 0h9" /></Icon>
      <Icon $w={24} $h={14} viewBox="0 0 24 14"><path d="m1 6 8-6 7 2v9l-9 2-6-2z" fill="#b9c8bb" /><path d="M2 7h8v3H2z" fill="#3a8d3f" /><circle cx="19" cy="9" r="4" fill="none" stroke="#b5c3d2" strokeWidth="1.500" /></Icon>
      <Icon $w={20} $h={14} viewBox="0 0 20 14"><path d="M5 8c6 0 12-3 11-6S5 2 4 8s9 5 12 2" stroke="#e8602c" strokeWidth="3" fill="none" /></Icon>
      <Icon $w={23} $h={14} viewBox="0 0 23 14"><path d="M0 0h14v9H0zM4 11h8v2H4z" fill="#d6dde6" /><path d="m8 2-4 3h5L6 8" stroke="#2b8ad0" fill="none" /><path d="m13 6 9 7m0-7-9 7" stroke="#d81e2c" strokeWidth="2.500" /></Icon>
      <Icon as={FaBell} $w={19} $h={14} color="#f3e312" />
      <Icon $w={23} $h={15} viewBox="0 0 23 15"><path d="M5 0h14l-3 12H3z" fill="#8ec7ee" /><path d="M0 8c2 6 20 4 22-4" stroke="#eaa03a" strokeWidth="2" fill="none" /><path d="M8 4h8m-9 3h8" stroke="#fff" /></Icon>
      <Icon as={FaVolumeUp} $w={22} $h={14} color="#e0643f" />
      <Icon $w={22} $h={14} viewBox="0 0 22 14"><path d="M0 3h14v11H0z" fill="#c9e0ea" /><ellipse cx="16" cy="7" rx="5" ry="6" fill="none" stroke="#2b7f96" strokeWidth="2" /><path d="m4 5 6 6V6" stroke="#2b7f96" fill="none" /></Icon>
      <Icon $w={21} $h={13} viewBox="0 0 21 13"><path d="M1 0h2v13H1zM4 1h8v2h9l-2 3 1 3h-7V7H4z" fill="#fff" /></Icon>
      <Icon $w={22} $h={15} viewBox="0 0 22 15"><path d="M0 0h22v11H0z" fill="#dce6f2" /><path d="M2 2h18v7H2z" fill="#3c6bb8" /><circle cx="11" cy="6" r="3.500" fill="#d75d78" stroke="#fff" /><path d="M6 13h8m0-4 5 5" stroke="#dce6f2" strokeWidth="2" /></Icon>
      <Icon $w={22} $h={14} viewBox="0 0 22 14"><path d="M0 4h4l6-4v13L4 9H0z" fill="#fff" /><ellipse cx="16" cy="9.500" rx="6" ry="4.500" fill="#e0322c" /><path d="m13 7 6 5m0-5-6 5" stroke="#fff" strokeWidth="1.500" /></Icon>
      <Icon $w={22} $h={15} viewBox="0 0 22 15"><path d="M0 0h22v15H0z" fill="#3b8de0" /><path d="m3 6 16-4-8 11-2-4-5 4 2-5z" fill="#fff" /></Icon>
      <Icon $w={23} $h={14} viewBox="0 0 23 14"><path d="M0 2 5 0l6 2 9 1 3 6-5 5H6L1 10z" fill="#8d8d8d" /><ellipse cx="14" cy="9" rx="6" ry="4" fill="#eee" /><path d="M12 8v2m4-2v2" stroke="#333" /></Icon>
    </Tray>
    <Clock>오전 11:13<br />2019-01-30</Clock>
    <ShowDesktop aria-label="바탕 화면 보기" />
  </Taskbar>
)

export default function App() {
  return (
    <Page>
      <GlobalStyle />
      <SlideTop />
      <Window>
        <BrowserChrome />
        <BissHeader />
        <Workspace>
          <SideMenu />
          <RequestForm />
          <Scroll>
            <Icon as={ChevronUp} $w={24} $h={20} strokeWidth={3} />
            <Spacer $grow={36} />
            <Thumb />
            <Spacer $grow={76} />
            <Icon as={ChevronDown} $w={24} $h={20} strokeWidth={3} />
          </Scroll>
        </Workspace>
        <TaskbarRow />
      </Window>
      <SlideFooter>
        <Brand $small>
          <PnuhMark small w={66} h={35} />
          <BrandText $small>
            <strong>부산대학교병원</strong>
            <span>Pusan National University Hospital</span>
          </BrandText>
        </Brand>
      </SlideFooter>
    </Page>
  )
}
